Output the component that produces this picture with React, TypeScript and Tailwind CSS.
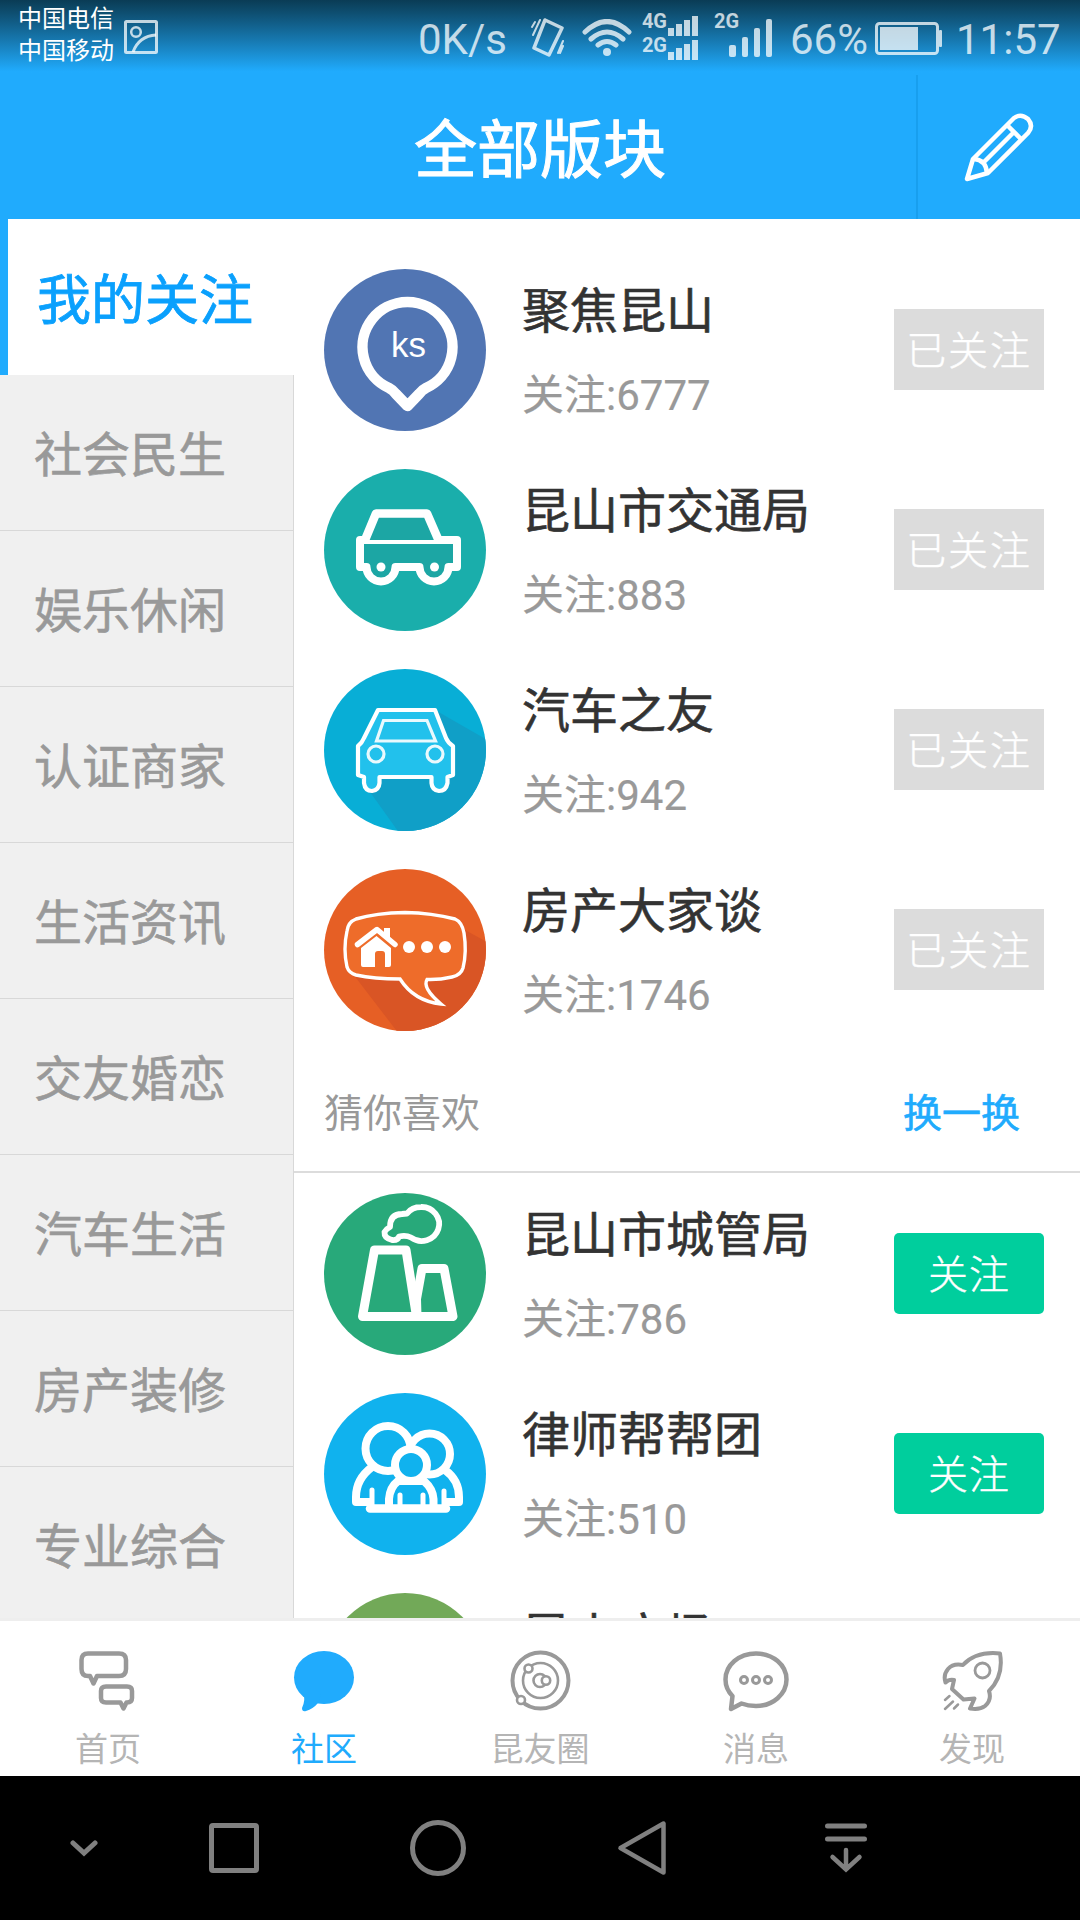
import type { ReactNode } from "react";

type Board = {
  name: string;
  count: number;
  followed?: boolean;
  icon: ReactNode;
};

const categories = ["社会民生", "娱乐休闲", "认证商家", "生活资讯", "交友婚恋", "汽车生活", "房产装修", "专业综合"];

const PinIcon = () => (
  <svg viewBox="0 0 162 162" className="size-[162px] shrink-0" fill="none">
    <circle cx="81" cy="81" r="81" fill="#5175b3" />
    <path
      d="M65 119A45 45 0 1 1 102 119Q98 121 95 125L83.5 137L72 125Q69 121 65 119Z"
      stroke="#fff"
      strokeWidth="10.5"
      strokeLinejoin="round"
    />
    <text x="84.5" y="88" textAnchor="middle" fill="#fff" fontSize="35" className="font-['Liberation_Sans',sans-serif]">
      ks
    </text>
  </svg>
);

const TrafficIcon = () => (
  <svg viewBox="0 0 162 162" className="size-[162px] shrink-0" fill="none">
    <circle cx="81" cy="81" r="81" fill="#1aaeab" />
    <path
      d="M41 71H36V98H42.5A14.5 14.5 0 0 0 71.5 98H95.5A14.5 14.5 0 0 0 124.5 98H133V71H113Z"
      fill="#1ca6a4"
      stroke="#fff"
      strokeWidth="8"
      strokeLinejoin="round"
    />
    <path d="M41 71L52 44.5H103L114.5 71" fill="#1ca6a4" stroke="#fff" strokeWidth="8.5" strokeLinejoin="round" />
    <circle cx="57" cy="98" r="4.5" fill="#fff" />
    <circle cx="110.5" cy="98" r="4.5" fill="#fff" />
  </svg>
);

const CarIcon = () => (
  <svg viewBox="0 0 162 162" className="size-[162px] shrink-0" fill="none">
    <defs>
      <clipPath id="carClip">
        <circle cx="81" cy="81" r="81" />
      </clipPath>
    </defs>
    <circle cx="81" cy="81" r="81" fill="#08aed6" />
    <path d="M111 41L165 72V165H76L41 116Z" fill="#109fc7" clipPath="url(#carClip)" />
    <path
      d="M54 41H111L122 69Q124 74 129 77V106L123.5 108V114Q122 122 115 122Q108 121 107.5 114V108H55.5V114Q55 121 48 122Q41 122 40 114V108L34 106V77Q38 74 40 69Z"
      fill="#22c1ec"
      stroke="#fff"
      strokeWidth="4.2"
      strokeLinejoin="round"
    />
    <g stroke="#fff" strokeOpacity=".9" strokeWidth="3.2">
      <path d="M59.5 51.5H103L111.5 72H52.5Z" />
      <circle cx="52" cy="85" r="8" />
      <circle cx="111" cy="85" r="8" />
    </g>
  </svg>
);

const HouseIcon = () => (
  <svg viewBox="0 0 162 162" className="size-[162px] shrink-0" fill="none">
    <defs>
      <clipPath id="houseClip">
        <circle cx="81" cy="81" r="81" />
      </clipPath>
    </defs>
    <circle cx="81" cy="81" r="81" fill="#e65f25" />
    <path d="M141 61L165 74V165H75L29 105Z" fill="#d95525" clipPath="url(#houseClip)" />
    <path
      d="M81 43.5Q108 44 131 50Q138 53 140 64Q143 83 139 99Q137 106 128 108Q115 111 103 110.5Q98 119 117 135Q90 132 76 110Q50 110 32 106Q25 104 23 98Q19 80 23 62Q24 53 32 50Q52 44 81 43.5Z"
      fill="#ee6c2a"
      stroke="#fff"
      strokeWidth="3.4"
    />
    <path d="M33.5 75.5L53 60.5L71 75.5" stroke="#fff" strokeWidth="5.5" strokeLinecap="round" strokeLinejoin="round" />
    <path d="M60 59H66V70L60 65Z" fill="#fff" />
    <path d="M37 79L52.5 67L67 79V96Q67 98 65 98H61V85Q61 82 58 82H54Q51 82 51 85V98H39Q37 98 37 96Z" fill="#fff" />
    <circle cx="85" cy="78" r="6" fill="#fff" />
    <circle cx="103" cy="78" r="6" fill="#fff" />
    <circle cx="121" cy="78" r="6" fill="#fff" />
  </svg>
);

const FactoryIcon = () => (
  <svg viewBox="0 0 162 162" className="size-[162px] shrink-0" fill="none">
    <circle cx="81" cy="81" r="81" fill="#28a97a" />
    <g stroke="#fff" strokeLinejoin="round">
      <path d="M38.5 123.5L50.5 57H82L92.5 123.5Z" strokeWidth="9" />
      <path d="M93 123.5L92.5 106L98 75.5H120L129 123.5Z" strokeWidth="9" />
      <path
        d="M83 20.5Q88 14 97 14A17.5 17 0 1 1 87 44.5Q82 42 75 43.5Q74 47.5 68 47Q60 45 60.5 39Q62 36 66 34Q66 21 78 21Z"
        strokeWidth="5.8"
      />
    </g>
  </svg>
);

const PeopleIcon = () => (
  <svg viewBox="0 0 162 162" className="size-[162px] shrink-0" fill="none">
    <circle cx="81" cy="81" r="81" fill="#10b2ee" />
    <g stroke="#fff" strokeWidth="8" strokeLinejoin="round">
      <circle cx="64" cy="55.5" r="22.5" />
      <circle cx="105.5" cy="61" r="20.5" />
      <path d="M48 74Q32 86 32 104V109H46" />
      <path d="M121 77Q135 87 135 104V109H122" />
      <path d="M65 114V106Q66 94 74 88H100Q109 96 109.5 106V114" fill="#10b2ee" />
      <circle cx="87" cy="72" r="16" fill="#10b2ee" />
      <path d="M46 115.5H122" strokeWidth="8.5" strokeLinecap="round" />
    </g>
    <path d="M48 97V112M76 102V112M99 102V112M120 98V112" stroke="#fff" strokeWidth="5" strokeLinecap="round" />
  </svg>
);

const followedBoards: Board[] = [
  { name: "聚焦昆山", count: 6777, followed: true, icon: <PinIcon /> },
  { name: "昆山市交通局", count: 883, followed: true, icon: <TrafficIcon /> },
  { name: "汽车之友", count: 942, followed: true, icon: <CarIcon /> },
  { name: "房产大家谈", count: 1746, followed: true, icon: <HouseIcon /> },
];

const suggestedBoards: Board[] = [
  { name: "昆山市城管局", count: 786, icon: <FactoryIcon /> },
  { name: "律师帮帮团", count: 510, icon: <PeopleIcon /> },
];

const buttonBase = "mb-px h-[81px] w-[150px] pt-[5px] text-[40px] font-light text-white [-webkit-text-stroke:0.4px_white]";

const BoardRow = ({ board }: { board: Board }) => (
  <div className="flex h-[200px] shrink-0 items-center pr-9 pl-[30px]">
    {board.icon}
    <div className="ml-9 flex-1 pt-[3px]">
      <div className="text-[48px] leading-[88px] text-[#333] [-webkit-text-stroke:0.6px_#333]">{board.name}</div>
      <div className="text-[42px] leading-[80px] text-[#999] [-webkit-text-stroke:0.2px_#999]">关注:{board.count}</div>
    </div>
    {board.followed ? (
      <button className={`${buttonBase} bg-[#dcdcdc] tracking-[1.8px]`}>已关注</button>
    ) : (
      <button className={`${buttonBase} rounded-[5px] bg-[#00ce9d] tracking-[1px]`}>关注</button>
    )}
  </div>
);

const StatusBar = () => (
  <div className="flex h-[75px] items-start bg-linear-to-b from-[#0a3c55] to-[#20abfd] to-95% text-[42px] text-white/75">
    <div className="ml-[18px] w-[106px] pt-[3px] text-[24px] leading-[32px] text-white">
      <div>中国电信</div>
      <div>中国移动</div>
    </div>
    <svg viewBox="0 0 34 34" className="mt-5 size-[34px]" fill="none" stroke="currentColor" strokeWidth="3">
      <rect x="1.5" y="1.5" width="31" height="31" rx="1" />
      <circle cx="12" cy="12" r="4.8" strokeWidth="2.5" />
      <path d="M9 32Q15 16 32 15" />
    </svg>
    <span className="ml-auto w-[113px] leading-[80px]">0K/s</span>
    <svg viewBox="0 0 34 40" className="mt-[17px] h-10 w-[34px]" fill="none" stroke="currentColor" strokeLinecap="round">
      <path d="M14 3L31 11L18 38L3 31Z" strokeWidth="3.5" strokeLinejoin="round" />
      <path d="M1 10L4 5M2 18L9 3M32 29L29 36M27 36L32 24" strokeWidth="2" />
    </svg>
    <svg viewBox="0 0 50 38" className="mt-[19px] ml-[17px] h-[38px] w-[50px]" fill="none" stroke="currentColor" strokeWidth="5" strokeLinecap="round">
      <path d="M3 13Q25 -8 47 13M9 20Q25 6 41 20M16 26Q25 19 34 26" />
      <circle cx="25" cy="33" r="4" fill="currentColor" stroke="none" />
    </svg>
    <div className="mt-[5px] ml-[9px] w-[26px] text-right text-[20px] font-bold">
      <div className="h-6 leading-[32px]">4G</div>
      <div className="h-6 leading-[32px]">2G</div>
    </div>
    <svg viewBox="0 0 30 44" className="mt-4 ml-px h-11 w-[30px]" fill="currentColor">
      <path d="M0 12H6V20H0ZM8 8H14V20H8ZM16 4H22V20H16ZM24 0H30V20H24Z" />
      <path d="M0 36H6V44H0ZM8 32H14V44H8ZM16 28H22V44H16ZM24 24H30V44H24Z" />
    </svg>
    <span className="mt-[5px] ml-4 w-[26px] text-[20px] leading-[32px] font-bold">2G</span>
    <svg viewBox="0 0 44 38" className="mt-[19px] -ml-[11px] h-[38px] w-11" fill="currentColor">
      <rect x="0" y="26" width="7" height="12" rx="2" />
      <rect x="13" y="18" width="6" height="20" rx="2" />
      <rect x="25" y="9" width="6" height="29" rx="2" />
      <rect x="37" y="0" width="6" height="38" rx="2" />
    </svg>
    <span className="ml-[17px] w-[85px] leading-[80px]">66%</span>
    <svg viewBox="0 0 68 34" className="mt-[22px] h-[34px] w-[68px]" fill="currentColor">
      <rect x="1.5" y="1.5" width="61" height="30" rx="3" fill="none" stroke="currentColor" strokeWidth="3" />
      <rect x="5" y="5" width="38" height="23" />
      <rect x="64" y="8" width="3" height="17" rx="1" />
    </svg>
    <span className="ml-[13px] w-[124px] leading-[80px]">11:57</span>
  </div>
);

const tabIcon = "h-[66px] w-[66px]";

const tabs = [
  {
    label: "首页",
    icon: (
      <svg viewBox="0 0 66 66" className={tabIcon} fill="none" stroke="#999" strokeWidth="4.5" strokeLinejoin="round">
        <path d="M13 5.5H44Q51 5.5 51 12V21Q51 28 44 28H22L18.5 35.5L15 28H13Q6.5 28 6.5 21V12Q6.5 5.5 13 5.5Z" />
        <path d="M31 38.5H52Q57 38.5 57 43V50Q57 54.5 52 54.5H51.5L48.5 60.5L45.5 54.5H31Q26 54.5 26 50V43Q26 38.5 31 38.5Z" />
      </svg>
    ),
  },
  {
    label: "社区",
    active: true,
    icon: (
      <svg viewBox="0 0 66 66" className={tabIcon} fill="#20abfd">
        <ellipse cx="33" cy="29.5" rx="30" ry="26.5" />
        <path d="M12 46Q15 51 11 60Q11 64 15 63Q22 61 27 55L30 46Z" />
      </svg>
    ),
  },
  {
    label: "昆友圈",
    icon: (
      <svg viewBox="0 0 66 66" className={tabIcon} fill="none" stroke="#999" strokeWidth="2.6">
        <circle cx="33.5" cy="32.5" r="28" strokeWidth="4" />
        <circle cx="33.5" cy="32.5" r="17.5" />
        <circle cx="33" cy="32.5" r="6.5" />
        <circle cx="39" cy="32.5" r="4.2" fill="#fff" />
        <circle cx="21.5" cy="20.5" r="4" fill="#fff" />
        <circle cx="14" cy="52" r="4" fill="#fff" />
      </svg>
    ),
  },
  {
    label: "消息",
    icon: (
      <svg viewBox="0 0 66 66" className={tabIcon} fill="none" stroke="#999" strokeWidth="4.5" strokeLinejoin="round">
        <path d="M9.5 48Q2.5 41 2.5 31.5C2.5 17 16 5.5 33 5.5S63.5 17 63.5 31.5S50 58 33 58Q25 58 18.5 55.5L8 61Z" />
        <g strokeWidth="3">
          <circle cx="21" cy="32" r="3.5" />
          <circle cx="33" cy="32" r="3.5" />
          <circle cx="45" cy="32" r="3.5" />
        </g>
      </svg>
    ),
  },
  {
    label: "发现",
    icon: (
      <svg viewBox="0 0 66 66" className={tabIcon} fill="none" stroke="#999" strokeWidth="4" strokeLinejoin="round">
        <path d="M61 5.5Q37 3 24 17Q14 15 9 21Q4 27 6.5 34.5Q10 31 15 32L13 41L24.5 51.5L35.5 50.5L31 60.5Q41 62 46 58Q53 52 50 43Q65 28 61 5.5Z" />
        <circle cx="43.5" cy="22.5" r="7.5" strokeWidth="2.8" />
        <path d="M10.5 48L6 52M14 53.5L6 61M19 56.5L15 60.5" strokeWidth="2.5" strokeLinecap="round" />
      </svg>
    ),
  },
];

const TabBar = () => (
  <div className="grid h-[158px] grid-cols-5 border-t-[3px] border-[#eee] bg-white">
    {tabs.map((tab) => (
      <div key={tab.label} className="flex flex-col items-center pt-[27px]">
        {tab.icon}
        <span className={tab.active ? "text-[33px] leading-[72px] text-[#20abfd]" : "text-[33px] leading-[72px] text-[#b5b5b5]"}>
          {tab.label}
        </span>
      </div>
    ))}
  </div>
);

const SystemNav = () => (
  <div className="flex h-36 items-center bg-black pl-9">
    <div className="flex w-24 justify-center">
      <svg viewBox="0 0 28 18" className="h-[18px] w-7" fill="none" stroke="#808080" strokeWidth="5" strokeLinecap="round">
        <path d="M3 4L14 14L25 4" />
      </svg>
    </div>
    <div className="flex w-[204px] justify-center">
      <div className="size-[50px] rounded-[4px] border-[5px] border-[#808080]" />
    </div>
    <div className="flex w-[204px] justify-center">
      <div className="size-14 rounded-full border-[5px] border-[#808080]" />
    </div>
    <div className="flex w-[204px] justify-center">
      <svg viewBox="0 0 50 56" className="h-14 w-[50px]" fill="none" stroke="#808080" strokeWidth="4.5" strokeLinejoin="round">
        <path d="M46.5 3.5V52.5L3.5 28Z" />
      </svg>
    </div>
    <div className="flex w-[204px] justify-center">
      <svg viewBox="0 0 42 50" className="h-[50px] w-[42px]" fill="none" stroke="#808080" strokeLinecap="round">
        <path d="M2.5 3H39.5M2.5 16H39.5" strokeWidth="5" />
        <path d="M21 27V46M7.5 34L21 46.5L34.5 34" strokeWidth="4.5" />
      </svg>
    </div>
  </div>
);

const App = () => {
  return (
    <div className="flex h-[1920px] w-[1080px] flex-col overflow-hidden bg-white font-['Roboto','Noto_Sans_CJK_SC',sans-serif]">
      <header className="h-[219px] shrink-0 bg-[#20abfd]">
        <StatusBar />
        <div className="flex h-36 text-white">
          <div className="w-[164px]" />
          <h1 className="flex-1 text-center text-[63px] leading-[152px] [-webkit-text-stroke:1px_white]">全部版块</h1>
          <div className="flex w-[164px] items-center justify-center border-l-2 border-[#189fee]">
            <svg viewBox="0 0 70 70" className="size-[70px]" fill="none" stroke="currentColor" strokeWidth="4.5" strokeLinejoin="round">
              <path d="M3 67L9 47L50 6Q57 1 64 7Q70 14 64 21L24 61Z" />
              <path d="M43 13L58 28M50 20L18 52M10 47Q22 48 23 61" />
            </svg>
          </div>
        </div>
      </header>

      <main className="flex h-[1399px] shrink-0 overflow-hidden">
        <aside className="w-[294px] shrink-0">
          <div className="h-[156px] border-l-8 border-[#20abfd] pl-[29px] text-[54px] leading-[165px] text-[#0aa0fd] [-webkit-text-stroke:0.8px_#0aa0fd]">
            我的关注
          </div>
          {categories.map((name) => (
            <div
              key={name}
              className="h-[156px] border-r border-b border-[#d8d8d8] bg-[#f0f0f0] pl-[34px] text-[48px] leading-[162px] text-[#999] [-webkit-text-stroke:0.6px_#999]"
            >
              {name}
            </div>
          ))}
        </aside>
        <section className="flex flex-1 flex-col pt-[31px]">
          {followedBoards.map((board) => (
            <BoardRow key={board.name} board={board} />
          ))}
          <div className="mb-px flex h-[123px] shrink-0 justify-between border-b-2 border-[#dcdcdc] pr-[60px] pl-[30px] text-[39px] leading-[128px]">
            <span className="text-[#999]">猜你喜欢</span>
            <span className="text-[#20abfd] [-webkit-text-stroke:0.6px_#20abfd]">换一换</span>
          </div>
          {suggestedBoards.map((board) => (
            <BoardRow key={board.name} board={board} />
          ))}
          {/* next board, only its top edge scrolls into view */}
          <div className="flex h-[44px] shrink-0 overflow-hidden pt-[19px] pl-[30px]">
            <div className="size-[162px] shrink-0 rounded-full bg-[#72a958]" />
            <div className="ml-9 text-[48px] leading-[88px] text-[#333] [-webkit-text-stroke:0.6px_#333]">昆山广场</div>
          </div>
        </section>
      </main>

      <TabBar />
      <SystemNav />
    </div>
  );
};

export default App;
